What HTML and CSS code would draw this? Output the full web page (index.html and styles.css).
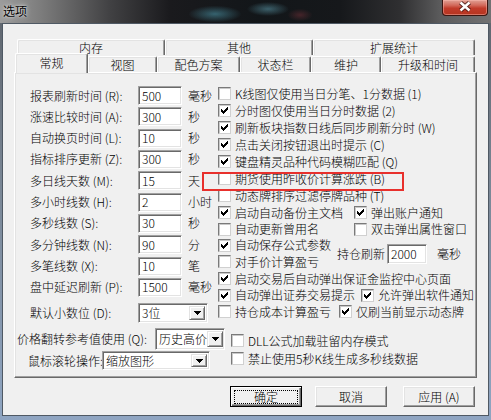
FILE: index.html
```html
<!DOCTYPE html>
<html lang="zh">
<head>
<meta charset="utf-8">
<title>选项</title>
<link rel="stylesheet" href="styles.css">
</head>
<body>
<div class="window">
  <div class="titlebar">
    <span class="title">选项</span>
    <div class="close">
      <svg width="14" height="11" viewBox="0 0 14 11"><path d="M2.5 1.5 L11.5 9.5 M11.5 1.5 L2.5 9.5" stroke="#3a1410" stroke-width="4.4" opacity=".75" fill="none"/><path d="M2.5 1.5 L11.5 9.5 M11.5 1.5 L2.5 9.5" stroke="#fff" stroke-width="2.4" fill="none"/></svg>
    </div>
  </div>
  <div class="client">
    <div class="tabs">
      <div class="tabrow back">
        <div class="tab tw149">内存</div>
        <div class="tab tw148">其他</div>
        <div class="tab tw162">扩展统计</div>
      </div>
      <div class="tabrow front">
        <div class="tab active tw73">常规</div>
        <div class="tab tw69">视图</div>
        <div class="tab tw83">配色方案</div>
        <div class="tab tw71">状态栏</div>
        <div class="tab tw70">维护</div>
        <div class="tab tw94">升级和时间</div>
      </div>
    </div>

    <div class="panel">
      <div class="upper">
        <div class="left">
          <div class="frow"><span class="lbl">报表刷新时间 (R):</span><span class="edit">500</span><span class="unit">毫秒</span></div>
          <div class="frow"><span class="lbl">涨速比较时间 (A):</span><span class="edit">300</span><span class="unit">秒</span></div>
          <div class="frow"><span class="lbl">自动换页时间 (L):</span><span class="edit">10</span><span class="unit">秒</span></div>
          <div class="frow"><span class="lbl">指标排序更新 (Z):</span><span class="edit">300</span><span class="unit">秒</span></div>
          <div class="frow"><span class="lbl">多日线天数 (M):</span><span class="edit">15</span><span class="unit">天</span></div>
          <div class="frow"><span class="lbl">多小时线数 (H):</span><span class="edit">2</span><span class="unit">小时</span></div>
          <div class="frow"><span class="lbl">多秒线数 (S):</span><span class="edit">30</span><span class="unit">秒</span></div>
          <div class="frow"><span class="lbl">多分钟线数 (N):</span><span class="edit">90</span><span class="unit">分</span></div>
          <div class="frow"><span class="lbl">多笔线数 (X):</span><span class="edit">10</span><span class="unit">笔</span></div>
          <div class="frow"><span class="lbl">盘中延迟刷新 (P):</span><span class="edit">1500</span><span class="unit">毫秒</span></div>
          <div class="frow dec"><span class="lbl">默认小数位 (D):</span>
            <div class="select sw70"><span class="val">3位</span><span class="drop"><svg width="7" height="4" viewBox="0 0 7 4"><path d="M0 0h7v1H0z M1 1h5v1H1z M2 2h3v1H2z M3 3h1v1H3z"/></svg></span></div>
          </div>
        </div>

        <div class="right">
          <div class="crow"><span class="box"></span>K线图仅使用当日分笔、1分数据 (1)</div>
          <div class="crow"><span class="box"><svg width="11" height="11" viewBox="0 0 11 11"><path d="M8 2h1v1H8z M7 3h2v1H7z M2 4h1v1H2z M6 4h3v1H6z M2 5h2v1H2z M5 5h3v1H5z M2 6h5v1H2z M3 7h3v1H3z M4 8h1v1H4z"/></svg></span>分时图仅使用当日分时数据 (2)</div>
          <div class="crow"><span class="box"><svg width="11" height="11" viewBox="0 0 11 11"><path d="M8 2h1v1H8z M7 3h2v1H7z M2 4h1v1H2z M6 4h3v1H6z M2 5h2v1H2z M5 5h3v1H5z M2 6h5v1H2z M3 7h3v1H3z M4 8h1v1H4z"/></svg></span>刷新板块指数日线后同步刷新分时 (W)</div>
          <div class="crow"><span class="box"><svg width="11" height="11" viewBox="0 0 11 11"><path d="M8 2h1v1H8z M7 3h2v1H7z M2 4h1v1H2z M6 4h3v1H6z M2 5h2v1H2z M5 5h3v1H5z M2 6h5v1H2z M3 7h3v1H3z M4 8h1v1H4z"/></svg></span>点击关闭按钮退出时提示 (C)</div>
          <div class="crow"><span class="box"><svg width="11" height="11" viewBox="0 0 11 11"><path d="M8 2h1v1H8z M7 3h2v1H7z M2 4h1v1H2z M6 4h3v1H6z M2 5h2v1H2z M5 5h3v1H5z M2 6h5v1H2z M3 7h3v1H3z M4 8h1v1H4z"/></svg></span>键盘精灵品种代码模糊匹配 (Q)</div>
          <div class="crow"><span class="box"></span>期货使用昨收价计算涨跌 (B)</div>
          <div class="crow"><span class="box"></span>动态牌排序过滤停牌品种 (T)</div>
          <div class="crow">
            <span class="cb cw136"><span class="box"><svg width="11" height="11" viewBox="0 0 11 11"><path d="M8 2h1v1H8z M7 3h2v1H7z M2 4h1v1H2z M6 4h3v1H6z M2 5h2v1H2z M5 5h3v1H5z M2 6h5v1H2z M3 7h3v1H3z M4 8h1v1H4z"/></svg></span>启动自动备份主文档</span>
            <span class="cb"><span class="box"><svg width="11" height="11" viewBox="0 0 11 11"><path d="M8 2h1v1H8z M7 3h2v1H7z M2 4h1v1H2z M6 4h3v1H6z M2 5h2v1H2z M5 5h3v1H5z M2 6h5v1H2z M3 7h3v1H3z M4 8h1v1H4z"/></svg></span>弹出账户通知</span>
          </div>
          <div class="crow h16">
            <span class="cb cw136"><span class="box"></span>自动更新曾用名</span>
            <span class="cb"><span class="box"></span>双击弹出属性窗口</span>
          </div>
          <div class="group">
            <div class="gcol">
              <div class="crow h165"><span class="box"><svg width="11" height="11" viewBox="0 0 11 11"><path d="M8 2h1v1H8z M7 3h2v1H7z M2 4h1v1H2z M6 4h3v1H6z M2 5h2v1H2z M5 5h3v1H5z M2 6h5v1H2z M3 7h3v1H3z M4 8h1v1H4z"/></svg></span>自动保存公式参数</div>
              <div class="crow h165"><span class="box"></span>对手价计算盈亏</div>
            </div>
            <span class="hold">持仓刷新</span><span class="edit ew40">2000</span><span class="unit2">毫秒</span>
          </div>
          <div class="crow"><span class="box"><svg width="11" height="11" viewBox="0 0 11 11"><path d="M8 2h1v1H8z M7 3h2v1H7z M2 4h1v1H2z M6 4h3v1H6z M2 5h2v1H2z M5 5h3v1H5z M2 6h5v1H2z M3 7h3v1H3z M4 8h1v1H4z"/></svg></span>启动交易后自动弹出保证金监控中心页面</div>
          <div class="crow h16">
            <span class="cb cw143"><span class="box"><svg width="11" height="11" viewBox="0 0 11 11"><path d="M8 2h1v1H8z M7 3h2v1H7z M2 4h1v1H2z M6 4h3v1H6z M2 5h2v1H2z M5 5h3v1H5z M2 6h5v1H2z M3 7h3v1H3z M4 8h1v1H4z"/></svg></span>自动弹出证券交易提示</span>
            <span class="cb"><span class="box"><svg width="11" height="11" viewBox="0 0 11 11"><path d="M8 2h1v1H8z M7 3h2v1H7z M2 4h1v1H2z M6 4h3v1H6z M2 5h2v1H2z M5 5h3v1H5z M2 6h5v1H2z M3 7h3v1H3z M4 8h1v1H4z"/></svg></span>允许弹出软件通知</span>
          </div>
          <div class="crow">
            <span class="cb cw121"><span class="box"></span>持仓成本计算盈亏</span>
            <span class="cb"><span class="box"><svg width="11" height="11" viewBox="0 0 11 11"><path d="M8 2h1v1H8z M7 3h2v1H7z M2 4h1v1H2z M6 4h3v1H6z M2 5h2v1H2z M5 5h3v1H5z M2 6h5v1H2z M3 7h3v1H3z M4 8h1v1H4z"/></svg></span>仅刷当前显示动态牌</span>
          </div>
        </div>
      </div>

      <div class="lower">
        <div class="lowleft">
          <div class="prow pa"><span class="plbl pl138">价格翻转参考值使用 (Q):</span>
            <div class="select sw70 sh22"><span class="val">历史高价</span><span class="drop"><svg width="7" height="4" viewBox="0 0 7 4"><path d="M0 0h7v1H0z M1 1h5v1H1z M2 2h3v1H2z M3 3h1v1H3z"/></svg></span></div>
          </div>
          <div class="prow pb"><span class="plbl pl74">鼠标滚轮操作:</span>
            <div class="select sw108 sh19"><span class="val">缩放图形</span><span class="drop"><svg width="7" height="4" viewBox="0 0 7 4"><path d="M0 0h7v1H0z M1 1h5v1H1z M2 2h3v1H2z M3 3h1v1H3z"/></svg></span></div>
          </div>
        </div>
        <div class="lowright">
          <div class="crow h18"><span class="box"></span>DLL公式加载驻留内存模式</div>
          <div class="crow h18"><span class="box"></span>禁止使用5秒K线生成多秒线数据</div>
        </div>
      </div>

      <div class="highlight"></div>
    </div>

    <div class="buttons">
      <div class="btn default"><span class="focus">确定</span></div>
      <div class="btn gap13">取消</div>
      <div class="btn gap16">应用 (A)</div>
    </div>
  </div>
</div>
</body>
</html>
```

FILE: styles.css
```css
* { box-sizing: border-box; }
html, body { margin: 0; padding: 0; }
body {
  width: 491px;
  height: 420px;
  overflow: hidden;
  font-family: "Noto Sans CJK SC", "Noto Sans", sans-serif;
  font-size: 12px;
  font-weight: 300;
  line-height: 14px;
  color: #000;
}

.window {
  width: 491px;
  height: 420px;
  display: flex;
  flex-direction: column;
  background: linear-gradient(180deg, #5d636b 0%, #7a8796 45%, #8fa5c2 100%);
}

/* title bar */
.titlebar {
  height: 23px;
  flex: none;
  display: flex;
  justify-content: space-between;
  align-items: flex-start;
  background:
    radial-gradient(ellipse 38px 12px at 215px 14px, rgba(80,160,180,.55), transparent 70%),
    radial-gradient(ellipse 30px 10px at 268px 9px, rgba(110,185,205,.45), transparent 70%),
    radial-gradient(ellipse 18px 9px at 300px 15px, rgba(160,60,70,.35), transparent 70%),
    linear-gradient(90deg, #9c9c9c 0, #7d7d7d 40px, #414143 110px, #1a1a1d 170px, #121619 260px, #16181b 340px, #2f2f31 400px, #5b5b5c 440px, #727273 491px);
}
.title {
  padding: 4px 0 0 3px;
  font-weight: 400;
  text-shadow: 0 0 5px rgba(255,255,255,.85), 0 0 2px rgba(255,255,255,.6);
}
.close {
  width: 46px;
  height: 16px;
  margin-right: 3px;
  padding-bottom: 3px;
  border: 1px solid #3b1510;
  border-top: none;
  border-radius: 0 0 4px 4px;
  background: linear-gradient(180deg, #e0a094 0%, #d26a5b 35%, #c13b2a 55%, #b53420 100%);
  box-shadow: inset 0 0 0 1px rgba(255,190,180,.45);
  display: flex;
  align-items: center;
  justify-content: center;
}
.close svg { display: block; }

/* client */
.client {
  flex: 1;
  margin: 0 2px 4px 2px;
  border: 1px solid #4f5964;
  background: #f0f0f0;
  display: flex;
  flex-direction: column;
  padding: 15px 0 8px 0;
}

/* tabs */
.tabs { margin-left: 12px; width: 460px; flex: none; }
.tabrow { display: flex; align-items: flex-start; }
.tabrow.back { height: 16px; margin-left: 2px; }
.tabrow.front { height: 17px; }
.tab {
  height: 16px;
  flex: none;
  display: flex;
  align-items: center;
  justify-content: center;
  background: #f0f0f0;
  border-top: 1px solid #fff;
  border-left: 1px solid #fff;
  border-right: 1px solid #696969;
  border-radius: 2px 2px 0 0;
  box-shadow: inset -1px 0 0 #a0a0a0, inset 1px 1px 0 #e3e3e3;
}
.front .tab { margin-top: 1px; }
.front .tab.active {
  height: 20px;
  margin-top: -2px;
  padding-bottom: 2px;
  position: relative;
  z-index: 2;
}
.tw149 { width: 148px; }
.tw148 { width: 148px; }
.tw162 { width: 162px; }
.tw73 { width: 73px; }
.tw69 { width: 69px; }
.tw83 { width: 83px; }
.tw71 { width: 71px; }
.tw70 { width: 70px; }
.tw94 { width: 94px; }

/* panel */
.panel {
  position: relative;
  margin-left: 11px;
  width: 463px;
  height: 306px;
  flex: none;
  border: 1px solid;
  border-color: #fff #696969 #696969 #fff;
  box-shadow: inset -1px -1px 0 #a0a0a0, inset 1px 1px 0 #e3e3e3;
  padding-top: 13px;
  display: flex;
  flex-direction: column;
}
.upper { display: flex; }
.left {
  width: 203px;
  flex: none;
  padding-left: 15px;
  display: flex;
  flex-direction: column;
  gap: 2.33px;
}
.frow { display: flex; align-items: center; height: 19px; flex: none; white-space: nowrap; }
.frow.dec { height: 20px; margin-top: 3.67px; }
.lbl { width: 108px; flex: none; }
.unit { margin-left: 6px; }

.edit {
  width: 44px;
  height: 19px;
  flex: none;
  display: flex;
  align-items: center;
  padding-left: 3px;
  background: #fff;
  border: 1px solid;
  border-color: #a0a0a0 #fff #fff #a0a0a0;
  box-shadow: inset 1px 1px 0 #696969, inset -1px -1px 0 #e3e3e3;
}
.edit.ew40 { width: 40px; height: 20px; }

.select {
  height: 20px;
  flex: none;
  display: flex;
  padding: 2px;
  background: #fff;
  border: 1px solid;
  border-color: #a0a0a0 #fff #fff #a0a0a0;
  box-shadow: inset 1px 1px 0 #696969, inset -1px -1px 0 #e3e3e3;
}
.select .val { flex: 1; display: flex; align-items: center; padding-left: 1px; white-space: nowrap; }
.select .drop {
  width: 16px;
  flex: none;
  display: flex;
  align-items: center;
  justify-content: center;
  background: #f0f0f0;
  border: 1px solid;
  border-color: #e3e3e3 #696969 #696969 #e3e3e3;
  box-shadow: inset 1px 1px 0 #fff, inset -1px -1px 0 #a0a0a0;
}
.select .drop svg { display: block; }
.sw70 { width: 70px; }
.sw108 { width: 108px; }
.sh22 { height: 22px; }
.sh19 { height: 19px; }

/* right column */
.right { margin-top: -1px; display: flex; flex-direction: column; }
.crow { display: flex; align-items: center; height: 17px; flex: none; white-space: nowrap; }
.crow.h16 { height: 16px; }
.crow.h165 { height: 16.5px; }
.crow.h18 { height: 18px; }
.cb { display: flex; align-items: center; flex: none; }
.cw136 { width: 136px; }
.cw143 { width: 143px; }
.cw121 { width: 121px; }
.box {
  width: 13px;
  height: 13px;
  flex: none;
  margin-right: 4px;
  background: #fff;
  border: 1px solid;
  border-color: #7a7a7a #d0d0d0 #d0d0d0 #7a7a7a;
  box-shadow: inset 1px 1px 0 #c9c9c9;
}
.box svg { display: block; }

.group { display: flex; align-items: center; flex: none; }
.gcol { width: 119px; display: flex; flex-direction: column; }
.hold { width: 50px; flex: none; }
.unit2 { margin-left: 10px; }

/* lower section */
.lower { display: flex; margin-top: 5px; }
.lowleft { width: 216px; flex: none; display: flex; flex-direction: column; }
.prow { display: flex; align-items: center; white-space: nowrap; }
.prow.pa { height: 23px; padding-left: 2px; }
.prow.pb { height: 20px; padding-left: 13px; }
.plbl { flex: none; }
.pl138 { width: 138px; }
.pl74 { width: 74px; }
.lowright { padding-top: 4px; display: flex; flex-direction: column; }

/* red highlight over the list */
.highlight {
  position: absolute;
  left: 187px;
  top: 99px;
  width: 202px;
  height: 19px;
  border: 2px solid #e8302c;
  pointer-events: none;
}

/* buttons */
.buttons {
  display: flex;
  justify-content: flex-end;
  margin-top: 8px;
  padding-right: 13px;
  flex: none;
}
.btn {
  width: 72px;
  height: 21px;
  flex: none;
  display: flex;
  align-items: center;
  justify-content: center;
  background: #f0f0f0;
  border: 1px solid;
  border-color: #fff #696969 #696969 #fff;
  box-shadow: inset -1px -1px 0 #a0a0a0, inset 1px 1px 0 #e3e3e3;
}
.btn.default {
  border: 1px solid #000;
  box-shadow: inset 1px 1px 0 #fff, inset -1px -1px 0 #696969, inset -2px -2px 0 #a0a0a0;
}
.btn .focus {
  width: 64px;
  height: 14px;
  display: flex;
  align-items: center;
  justify-content: center;
  border: 1px dotted #000;
}
.gap13 { margin-left: 13px; }
.gap16 { margin-left: 16px; }
```
